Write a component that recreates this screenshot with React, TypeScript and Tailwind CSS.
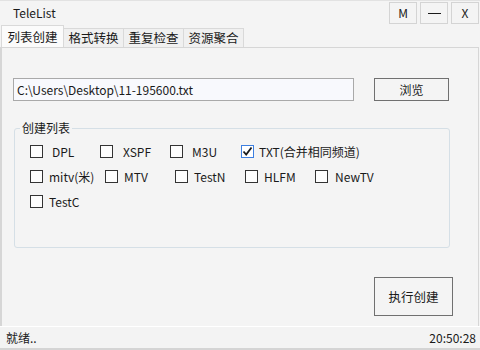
import React from "react";

type Item = { label: string; w: string; gap: string; checked?: boolean };

const rows: Item[][] = [
  [
    { label: "DPL", w: "w-[70px]", gap: "ml-[9px]" },
    { label: "XSPF", w: "w-[70px]", gap: "ml-[10px]" },
    { label: "M3U", w: "w-[71px]", gap: "ml-[9px]" },
    { label: "TXT(合并相同频道)", w: "w-[150px]", gap: "ml-[5px]", checked: true },
  ],
  [
    { label: "mitv(米)", w: "w-[75px]", gap: "ml-[6px]" },
    { label: "MTV", w: "w-[70px]", gap: "ml-[6px]" },
    { label: "TestN", w: "w-[70px]", gap: "ml-[6px]" },
    { label: "HLFM", w: "w-[70px]", gap: "ml-[6px]" },
    { label: "NewTV", w: "w-[80px]", gap: "ml-[7px]" },
  ],
  [{ label: "TestC", w: "w-[75px]", gap: "ml-[6px]" }],
];

function Check({ item }: { item: Item }) {
  return (
    <div className={`${item.w} flex items-center shrink-0`}>
      {item.checked ? (
        <div className="w-[13px] h-[13px] border border-[#3d7fe0] bg-white flex items-center justify-center">
          <svg width="11" height="11" viewBox="0 0 11 11">
            <path d="M1.5 5.5 L4.2 8.5 L9.5 1.5" fill="none" stroke="#1a1a1a" strokeWidth="1.8" />
          </svg>
        </div>
      ) : (
        <div className="w-[13px] h-[13px] border border-[#333333] bg-[#fdfdfd]" />
      )}
      <span className={`${item.gap} text-[12px] leading-[16px] text-[#1a1a1a] whitespace-nowrap`}>
        {item.label}
      </span>
    </div>
  );
}

export default function App() {
  return (
    <div className="w-[480px] h-[350px] bg-[#f4f4f4] flex flex-col overflow-hidden font-['Noto_Sans_CJK_SC','Noto_Sans',sans-serif] text-[#1a1a1a]">
      {/* Title bar */}
      <div className="h-[26px] flex items-start border-t border-[#e2e2e2]">
        <div className="pl-[13px] pt-[4px] text-[12px] leading-[16px]">TeleList</div>
        <div className="ml-auto flex gap-[3px] pt-[1px] pr-[1px]">
          <button className="w-[28px] h-[22px] border border-[#d4d4d4] text-[12px] leading-[16px]">M</button>
          <button className="w-[28px] h-[22px] border border-[#d4d4d4] flex items-center justify-center">
            <span className="w-[13px] h-[1px] bg-[#1a1a1a]" />
          </button>
          <button className="w-[28px] h-[22px] border border-[#d4d4d4] text-[12px] leading-[16px]">X</button>
        </div>
      </div>

      {/* Tabs */}
      <div className="h-[21px] flex items-end pl-[1px] relative z-10">
        <div className="w-[63px] h-[22px] bg-[#fbfbfb] border border-[#d9d9d9] border-b-0 flex items-center justify-center text-[12.5px] leading-[16px]">
          列表创建
        </div>
        {["格式转换", "重复检查", "资源聚合"].map((t) => (
          <div
            key={t}
            className="w-[60px] h-[19px] bg-[#f0f0f0] border border-[#d9d9d9] border-l-0 border-b-0 flex items-center justify-center text-[12.5px] leading-[16px]"
          >
            {t}
          </div>
        ))}
      </div>

      {/* Panel */}
      <div className="flex-1 border-t border-l-2 border-r border-[#d6d6d6] mr-[1px] pl-[11px] pt-[30px] flex flex-col">
        <div className="flex items-center">
          <div className="w-[341px] h-[23px] border border-[#a9a9a9] bg-[#f8f9fd] pl-[3px] text-[12px] leading-[21px] whitespace-nowrap">
            C:\Users\Desktop\11-195600.txt
          </div>
          <button className="ml-[20px] w-[75px] h-[23px] border border-[#707070] bg-[#f4f4f4] text-[12px] leading-[16px]">
            浏览
          </button>
        </div>

        <fieldset className="ml-[1px] mt-[19px] w-[436px] h-[128px] border border-[#d5dfe6] rounded-[3px]">
          <legend className="ml-[5px] px-[2px] text-[12px] leading-[16px]">创建列表</legend>
          <div className="flex flex-col gap-[12px] pl-[15px] pt-[9px]">
            {rows.map((r, i) => (
              <div key={i} className="flex h-[13px] items-center">
                {r.map((it) => (
                  <Check key={it.label} item={it} />
                ))}
              </div>
            ))}
          </div>
        </fieldset>

        <div className="mt-[29px] ml-[361px]">
          <button className="w-[79px] h-[39px] border border-[#707070] bg-[#f4f4f4] text-[12.5px] leading-[16px]">
            执行创建
          </button>
        </div>
      </div>

      {/* Status bar */}
      <div className="h-[24px] border-t border-white border-b-2 border-b-[#d4d4d4] bg-[#f3f3f3] flex items-center justify-between pl-[6px] pr-[4px] text-[12px] leading-[16px]">
        <span>就绪..</span>
        <span>20:50:28</span>
      </div>
    </div>
  );
}
